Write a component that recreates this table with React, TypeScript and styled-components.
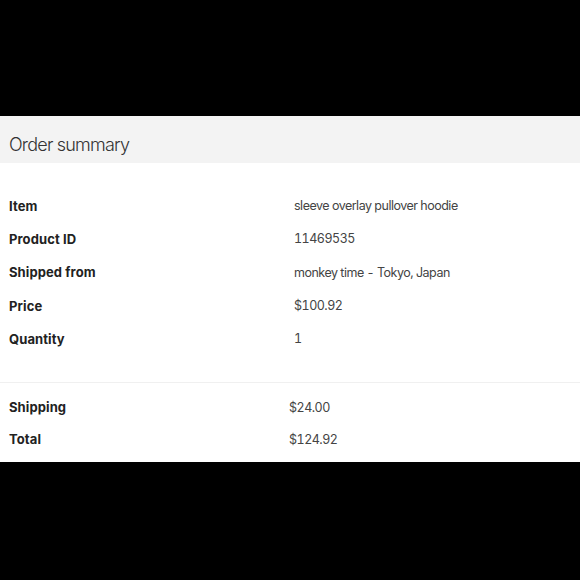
import React from "react";
import styled, { createGlobalStyle } from "styled-components";

interface Row {
    label: string;
    value: string;
}

const details: Row[] = [
    { label: "Item", value: "sleeve overlay pullover hoodie" },
    { label: "Product ID", value: "11469535" },
    { label: "Shipped from", value: "monkey time - Tokyo, Japan" },
    { label: "Price", value: "$100.92" },
    { label: "Quantity", value: "1" },
];

const totals: Row[] = [
    { label: "Shipping", value: "$24.00" },
    { label: "Total", value: "$124.92" },
];

const App: React.FC = () => {
    return (
        <>
            <GlobalStyle />
            <Page>
                <Card>
                    <Header>Order summary</Header>
                    <Section $top={26} $bottom={27} $divider>
                        {details.map((row) => (
                            <InfoRow key={row.label} $valueAt={285} $height={33.3}>
                                <Label>{row.label}</Label>
                                <Value>{row.value}</Value>
                            </InfoRow>
                        ))}
                    </Section>
                    <Section $top={8} $bottom={7}>
                        {totals.map((row) => (
                            <InfoRow key={row.label} $valueAt={280} $height={32}>
                                <Label>{row.label}</Label>
                                <Value>{row.value}</Value>
                            </InfoRow>
                        ))}
                    </Section>
                </Card>
            </Page>
        </>
    );
};

export default App;

const GlobalStyle = createGlobalStyle`
    html, body {
        margin: 0;
        padding: 0;
        background: #000;
    }
`;

const Page = styled.div`
    width: 580px;
    height: 580px;
    background: #000;
    padding-top: 116px;
    box-sizing: border-box;
`;

const Card = styled.div`
    background: #fff;
    font-family: "Inter", "Liberation Sans", sans-serif;
    color: #333;
`;

const Header = styled.div`
    height: 47px;
    box-sizing: border-box;
    background: #f3f3f3;
    padding: 9px 0 0 9px;
    display: flex;
    align-items: center;
    font-size: 18px;
    font-weight: 300;
    letter-spacing: -0.8px;
    color: #333;
`;

const Section = styled.div<{ $top: number; $bottom: number; $divider?: boolean }>`
    padding: ${(p) => p.$top}px 0 ${(p) => p.$bottom}px 9px;
    border-bottom: ${(p) => (p.$divider ? "1px solid #f0f0f0" : "none")};
`;

const InfoRow = styled.div<{ $valueAt: number; $height: number }>`
    display: grid;
    grid-template-columns: ${(p) => p.$valueAt}px 1fr;
    align-items: center;
    height: ${(p) => p.$height}px;
`;

const Label = styled.span`
    font-size: 13px;
    font-weight: 700;
    letter-spacing: 0.1px;
    color: #222;
`;

const Value = styled.span`
    font-size: 12.5px;
    font-weight: 400;
    letter-spacing: -0.5px;
    font-variant-numeric: tabular-nums;
    color: #444;
`;
